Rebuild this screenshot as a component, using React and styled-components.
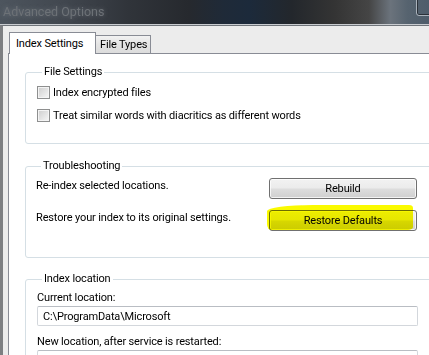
import React from "react";
import styled, { createGlobalStyle } from "styled-components";

const GlobalStyle = createGlobalStyle`
  html, body { margin: 0; padding: 0; background: #ececec; overflow: hidden; }
  body {
    font-family: Roboto, "Liberation Sans", sans-serif;
    font-size: 11px;
    letter-spacing: -0.15px;
    color: #000;
  }
`;

const Frame = styled.div`
  width: 429px;
  height: 355px;
  overflow: hidden;
  background: #ececec;
  display: flex;
  flex-direction: column;
`;

const TitleBar = styled.div`
  position: relative;
  flex: none;
  height: 25px;
  box-sizing: border-box;
  padding: 0 0 1px 3px;
  display: flex;
  align-items: center;
  border-bottom: 1px solid #c9ccd0;
  background: linear-gradient(
    90deg,
    #4d555e 0%,
    #424850 14%,
    #30343a 30%,
    #26292e 44%,
    #1f2a38 52%,
    #1c2a3b 58%,
    #23272c 68%,
    #343434 78%,
    #454545 86%,
    #6b737c 91%,
    #56636f 95%,
    #4f5d6b 100%
  );
`;

const Title = styled.span`
  font-family: Roboto, "Liberation Sans", sans-serif;
  font-size: 12.5px;
  letter-spacing: 0;
  color: #6d7277;
  text-shadow: 0 0 5px rgba(190, 196, 204, 0.35);
`;

const CornerButton = styled.span`
  position: absolute;
  left: 416px;
  top: -3px;
  width: 20px;
  height: 17px;
  border: 1px solid #a9b2bb;
  border-radius: 3px;
  box-shadow: inset 0 0 0 1px #2b3139;
`;

const Body = styled.div`
  flex: 1;
  display: flex;
  flex-direction: column;
  border-top: 1px solid #6f747a;
  border-left: 3px solid #7d7f82;
  min-height: 0;
`;

const TabStrip = styled.div`
  flex: none;
  height: 27px;
  padding-left: 6px;
  display: flex;
  align-items: flex-end;
`;

const Tab = styled.div`
  position: relative;
  box-sizing: border-box;
  display: flex;
  align-items: center;
  border: 1px solid #898c95;
  border-bottom: none;
  ${(p) =>
    p.$active
      ? `
    z-index: 2;
    width: 87px;
    height: 22px;
    margin-bottom: -1px;
    padding-left: 6px;
    background: #fff;
  `
      : `
    width: 56px;
    height: 18px;
    margin-left: -1px;
    padding-left: 4px;
    background: linear-gradient(#f2f2f2, #e4e4e4 50%, #dcdcdc);
  `}
`;

const Panel = styled.div`
  flex: 1;
  width: 470px;
  margin-left: 5px;
  box-sizing: border-box;
  border: 1px solid #898c95;
  background: #fff;
  padding: 10px 0 0 16px;
`;

const Group = styled.fieldset`
  margin: ${(p) => p.$gap || 0}px 0 0 0;
  padding: 0 0 ${(p) => p.$bottom || 0}px ${(p) => p.$inset || 11}px;
  border: 1px solid #d5dfe5;
  border-radius: 3px;
  min-width: 0;
`;

const Legend = styled.legend`
  margin-left: 5px;
  padding: 0 2px;
  line-height: 16px;
  font-size: 11px;
`;

const CheckRow = styled.label`
  display: flex;
  align-items: center;
  gap: 3px;
  height: 23px;
  &:first-of-type {
    margin-top: 1px;
  }
`;

const Check = styled.input.attrs({ type: "checkbox" })`
  appearance: none;
  margin: 0;
  width: 13px;
  height: 13px;
  box-sizing: border-box;
  border: 1px solid #8e8f8f;
  background: linear-gradient(135deg, #cdcdcd 0%, #e2e2e2 50%, #f7f7f7 100%);
  box-shadow: inset 0 0 0 1px #f4f4f4;
`;

const Stack = styled.div`
  display: flex;
  flex-direction: column;
  gap: ${(p) => p.$gap || 0}px;
  margin-top: ${(p) => p.$top || 0}px;
`;

const ActionRow = styled.div`
  display: flex;
  align-items: flex-start;
  height: 21px;
`;

const ActionText = styled.span`
  flex: 0 0 233px;
  line-height: 16px;
`;

const Button = styled.button`
  position: relative;
  width: 148px;
  height: 21px;
  padding: 0;
  box-sizing: border-box;
  border: 1px solid #707070;
  border-radius: 3px;
  background: linear-gradient(#f2f2f2 0%, #ebebeb 48%, #dddddd 52%, #cfcfcf 100%);
  box-shadow: inset 0 0 0 1px rgba(255, 255, 255, 0.75);
  font-family: Roboto, "Liberation Sans", sans-serif;
  font-size: 11px;
  letter-spacing: -0.15px;
  color: #000;
`;

const Highlight = styled.span`
  position: absolute;
  left: -3px;
  top: -6px;
  width: 146px;
  height: 25px;
  background: #fafa00;
  mix-blend-mode: multiply;
  border-radius: 46px 4px 5px 4px / 6px 3px 3px 6px;
  pointer-events: none;
`;

const FieldLabel = styled.div`
  line-height: 16px;
  margin-top: ${(p) => p.$top || 0}px;
`;

const TextBox = styled.input`
  display: block;
  width: 381px;
  height: 20px;
  margin: 0;
  box-sizing: border-box;
  padding: 0 5px;
  border: 1px solid #d3d7dc;
  border-top-color: #b9bdc3;
  border-radius: 2px;
  background: #fff;
  font-family: Roboto, "Liberation Sans", sans-serif;
  font-size: 11px;
  letter-spacing: -0.15px;
  color: #000;
  outline: none;
`;

export default function App() {
  return (
    <>
      <GlobalStyle />
      <Frame>
        <TitleBar>
          <Title>Advanced Options</Title>
          <CornerButton />
        </TitleBar>
        <Body>
          <TabStrip>
            <Tab $active>Index Settings</Tab>
            <Tab>File Types</Tab>
          </TabStrip>
          <Panel>
            <Group $bottom={16}>
              <Legend>File Settings</Legend>
              <CheckRow>
                <Check />
                Index encrypted files
              </CheckRow>
              <CheckRow>
                <Check />
                Treat similar words with diacritics as different words
              </CheckRow>
            </Group>
            <Group $gap={14} $bottom={26} $inset={10}>
              <Legend>Troubleshooting</Legend>
              <Stack $gap={11} $top={4}>
                <ActionRow>
                  <ActionText>Re-index selected locations.</ActionText>
                  <Button>Rebuild</Button>
                </ActionRow>
                <ActionRow>
                  <ActionText>Restore your index to its original settings.</ActionText>
                  <Button>
                    Restore Defaults
                    <Highlight />
                  </Button>
                </ActionRow>
              </Stack>
            </Group>
            <Group $gap={13} $bottom={20}>
              <Legend>Index location</Legend>
              <FieldLabel $top={3}>Current location:</FieldLabel>
              <TextBox readOnly value={"C:\\ProgramData\\Microsoft"} />
              <FieldLabel $top={8}>New location, after service is restarted:</FieldLabel>
              <TextBox readOnly value="" />
            </Group>
          </Panel>
        </Body>
      </Frame>
    </>
  );
}
